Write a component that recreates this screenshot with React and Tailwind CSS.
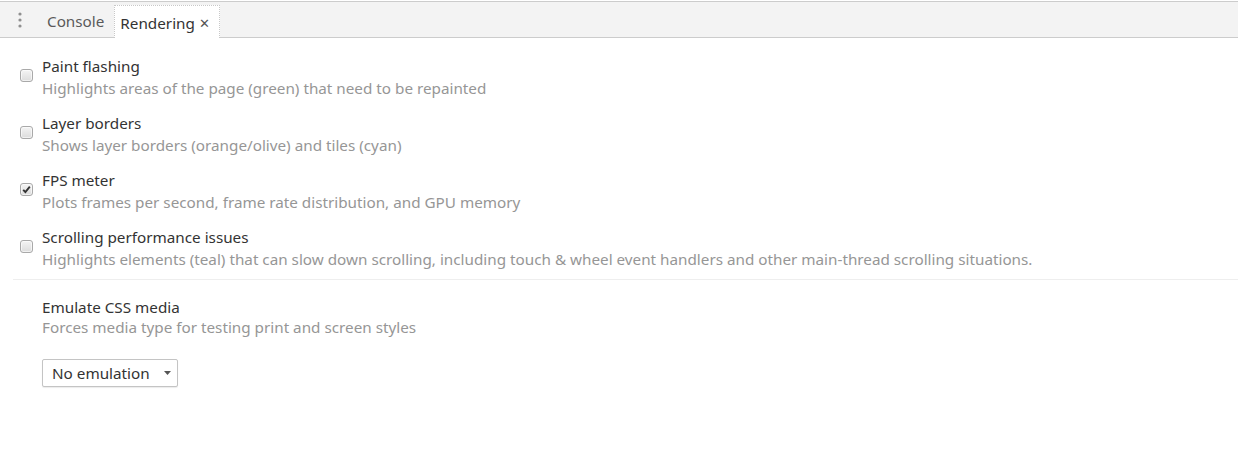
import React from "react";

function Checkbox({ checked }) {
  return (
    <div className="h-[13px] w-[13px] shrink-0 rounded-[3px] border border-[#a9a9a9] bg-gradient-to-b from-[#f4f4f4] to-[#dcdcdc] flex items-center justify-center shadow-[inset_0_0_0_1px_rgba(255,255,255,0.6)]">
      {checked && (
        <svg width="9" height="9" viewBox="0 0 9 9">
          <path d="M1.2 4.8 L3.4 7 L7.8 1.6" fill="none" stroke="#333" strokeWidth="1.9" />
        </svg>
      )}
    </div>
  );
}

function Row({ title, desc, checked }) {
  return (
    <div className="flex gap-[9px] pl-[20px] h-[57px]">
      <div className="pt-[13px]">
        <Checkbox checked={checked} />
      </div>
      <div className="flex flex-col">
        <div className="text-[#333] leading-[20px]">{title}</div>
        <div className="text-[#969696] leading-[24px]">{desc}</div>
      </div>
    </div>
  );
}

export default function App() {
  return (
    <div className="w-[1238px] h-[454px] bg-white text-[15.25px] overflow-hidden" style={{ fontFamily: '"Noto Sans", "Open Sans", sans-serif' }}>
      <div className="mt-[1px] h-[37px] border-t border-b border-[#cccccc] bg-[#f3f3f3] flex items-end">
        <div className="w-[39px] h-full flex items-center justify-center">
          <svg width="4" height="16" viewBox="0 0 4 16">
            <circle cx="2" cy="2" r="1.6" fill="#8f8f8f" />
            <circle cx="2" cy="8" r="1.6" fill="#8f8f8f" />
            <circle cx="2" cy="14" r="1.6" fill="#8f8f8f" />
          </svg>
        </div>
        <div className="h-full flex items-center pt-[4px] pl-[8px] pr-[10px] text-[#5a5a5a]">Console</div>
        <div className="h-[33px] mb-[-1px] flex items-center gap-[4px] pt-[2px] bg-white border border-dotted border-b-0 border-[#c8c8c8] pl-[5px] pr-[9px] text-[#333]">
          <span>Rendering</span>
          <span className="text-[#555] text-[13px] leading-none">✕</span>
        </div>
      </div>
      <div className="pt-[18px]">
        <Row title="Paint flashing" desc="Highlights areas of the page (green) that need to be repainted" />
        <Row title="Layer borders" desc="Shows layer borders (orange/olive) and tiles (cyan)" />
        <Row title="FPS meter" desc="Plots frames per second, frame rate distribution, and GPU memory" checked />
        <Row title="Scrolling performance issues" desc="Highlights elements (teal) that can slow down scrolling, including touch & wheel event handlers and other main-thread scrolling situations." />
      </div>
      <div className="ml-[13px] border-t border-[#eeeeee] mt-[-5px]" />
      <div className="pl-[42px] pt-[17px]">
        <div className="text-[#333] leading-[20px]">Emulate CSS media</div>
        <div className="text-[#969696] leading-[20px]">Forces media type for testing print and screen styles</div>
        <div className="mt-[22px] inline-flex items-center h-[28px] w-[136px] border border-[#c4c4c4] rounded-[2px] bg-white pl-[9px] text-[#333] shadow-[0_1px_1px_rgba(0,0,0,0.08)]">
          <span>No emulation</span>
          <svg className="ml-[14px]" width="7" height="4" viewBox="0 0 7 4">
            <path d="M0 0 L7 0 L3.5 4 Z" fill="#555" />
          </svg>
        </div>
      </div>
    </div>
  );
}
